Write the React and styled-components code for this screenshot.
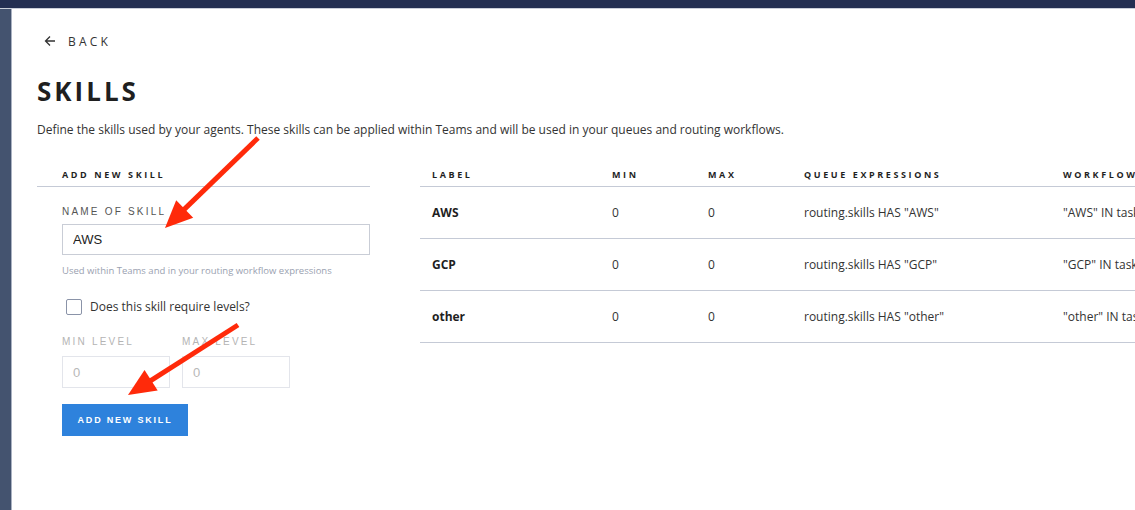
import React from 'react';
import styled, { createGlobalStyle } from 'styled-components';

const GlobalStyle = createGlobalStyle`
  html, body {
    margin: 0;
    padding: 0;
    background: #ffffff;
    font-family: 'Open Sans', sans-serif;
    color: #2b2b2b;
    overflow: hidden;
  }
`;

const Frame = styled.div`
  width: 1135px;
  height: 510px;
  display: flex;
  flex-direction: column;
  position: relative;
  overflow: hidden;
`;

const TopBar = styled.div`
  height: 8px;
  flex: none;
  background: #232f52;
  border-bottom: 1px solid #c9ced9;
`;

const Body = styled.div`
  flex: 1;
  display: flex;
  min-height: 0;
`;

const SideStrip = styled.div`
  width: 11px;
  flex: none;
  background: #44536f;
  border-right: 1px solid #aab2c2;
`;

const Main = styled.main`
  flex: 1;
  padding: 22px 0 0 25px;
  min-width: 0;
  overflow: hidden;
`;

const BackLink = styled.a`
  display: flex;
  align-items: center;
  gap: 12px;
  margin-left: 7px;
  height: 20px;
  font-size: 12px;
  letter-spacing: 3.2px;
  color: #333;
  cursor: pointer;

  svg {
    width: 12px;
    height: 12px;
  }
`;

const Title = styled.h1`
  margin: 24px 0 0;
  font-size: 26px;
  line-height: 32px;
  font-weight: 700;
  letter-spacing: 3px;
  color: #1f1f1f;
`;

const Intro = styled.p`
  margin: 14px 0 0;
  font-size: 12px;
  line-height: 18px;
  color: #333;
`;

const Columns = styled.div`
  display: flex;
  gap: 50px;
  margin-top: 27px;
`;

const FormPanel = styled.section`
  width: 333px;
  flex: none;
`;

const PanelHead = styled.h3`
  box-sizing: border-box;
  margin: 0;
  padding: 0 0 2px 25px;
  height: 21px;
  line-height: 18px;
  font-size: 9px;
  font-weight: 700;
  letter-spacing: 2.6px;
  color: #1f1f1f;
  border-bottom: 1px solid #c5cad6;
`;

const FormBody = styled.div`
  padding: 19px 0 0 25px;
  display: flex;
  flex-direction: column;
`;

const FieldLabel = styled.label`
  display: block;
  font-family: 'Liberation Sans', Arial, sans-serif;
  font-size: 10px;
  line-height: 12px;
  letter-spacing: 2.2px;
  color: ${({ muted }) => (muted ? '#b4b4b4' : '#555')};
`;

const TextInput = styled.input`
  box-sizing: border-box;
  width: ${({ w }) => w || '100%'};
  height: ${({ h }) => h || '32px'};
  margin-top: ${({ gap }) => gap || '8px'};
  padding: 0 10px;
  border: 1px solid ${({ light }) => (light ? '#e3e5eb' : '#c9cdd6')};
  border-radius: 0;
  font-family: 'Liberation Sans', Arial, sans-serif;
  font-size: 13px;
  color: #222;
  outline: none;

  &::placeholder {
    color: #b8b8b8;
  }
`;

const Help = styled.div`
  margin-top: 9px;
  font-size: 9.5px;
  line-height: 14px;
  color: #9aa1b0;
`;

const CheckRow = styled.label`
  display: flex;
  align-items: center;
  gap: 8px;
  margin-top: 20px;
  padding-left: 4px;
  font-size: 12px;
  color: #333;
`;

const Box = styled.span`
  box-sizing: border-box;
  width: 16px;
  height: 16px;
  border: 1px solid #8a93a8;
  border-radius: 2px;
  background: #fff;
`;

const LevelRow = styled.div`
  display: flex;
  gap: 12px;
  margin-top: 21px;
`;

const LevelField = styled.div`
  display: flex;
  flex-direction: column;
`;

const PrimaryButton = styled.button`
  align-self: flex-start;
  margin-top: 16px;
  width: 126px;
  height: 32px;
  border: none;
  background: #2e82dc;
  color: #fff;
  font-family: 'Liberation Sans', Arial, sans-serif;
  font-size: 9px;
  font-weight: 700;
  letter-spacing: 1.8px;
  cursor: pointer;
`;

const TableWrap = styled.section`
  flex: none;
  width: 800px;
`;

const Table = styled.table`
  border-collapse: collapse;
  table-layout: fixed;
  width: 800px;
`;

const Th = styled.th`
  box-sizing: border-box;
  width: ${({ w }) => w}px;
  text-align: left;
  padding: 0 0 1px 12px;
  height: 20px;
  line-height: 18px;
  font-size: 9px;
  font-weight: 700;
  letter-spacing: 2.6px;
  color: #1f1f1f;
  white-space: nowrap;
  border-bottom: 1px solid #c5cad6;
`;

const Td = styled.td`
  height: 51px;
  padding: 0 0 0 12px;
  font-size: 12px;
  font-weight: ${({ bold }) => (bold ? 700 : 400)};
  color: ${({ bold }) => (bold ? '#1f1f1f' : '#333')};
  white-space: nowrap;
  overflow: hidden;
  border-bottom: 1px solid #c5cad6;
`;

const Overlay = styled.svg`
  position: absolute;
  inset: 0;
  pointer-events: none;
`;

const skills = ['AWS', 'GCP', 'other'];

const columns = [
  ['LABEL', 180],
  ['MIN', 96],
  ['MAX', 96],
  ['QUEUE EXPRESSIONS', 259],
  ['WORKFLOW EXPRESSIONS', 169],
];

function Arrow({ x1, y1, x2, y2 }) {
  const ang = Math.atan2(y2 - y1, x2 - x1);
  const len = 30;
  const half = 0.42;
  const bx = x2 - Math.cos(ang) * (len - 4);
  const by = y2 - Math.sin(ang) * (len - 4);
  const p1 = [x2 - Math.cos(ang - half) * len, y2 - Math.sin(ang - half) * len];
  const p2 = [x2 - Math.cos(ang + half) * len, y2 - Math.sin(ang + half) * len];
  return (
    <g>
      <line x1={x1} y1={y1} x2={bx} y2={by} stroke="#ff2a0a" strokeWidth="5" strokeLinecap="butt" />
      <polygon points={`${x2},${y2} ${p1[0]},${p1[1]} ${p2[0]},${p2[1]}`} fill="#ff2a0a" />
    </g>
  );
}

export default function App() {
  return (
    <>
      <GlobalStyle />
      <Frame>
        <TopBar />
        <Body>
          <SideStrip />
          <Main>
            <BackLink>
              <svg viewBox="0 0 12 12" fill="none" stroke="#333" strokeWidth="1.3">
                <path d="M11 6H1.5M6 1.5L1.5 6 6 10.5" />
              </svg>
              BACK
            </BackLink>
            <Title>SKILLS</Title>
            <Intro>
              Define the skills used by your agents. These skills can be applied within Teams and will be used in your queues and routing workflows.
            </Intro>
            <Columns>
              <FormPanel>
                <PanelHead>ADD NEW SKILL</PanelHead>
                <FormBody>
                  <FieldLabel>NAME OF SKILL</FieldLabel>
                  <TextInput defaultValue="AWS" h="31px" gap="6px" />
                  <Help>Used within Teams and in your routing workflow expressions</Help>
                  <CheckRow>
                    <Box />
                    Does this skill require levels?
                  </CheckRow>
                  <LevelRow>
                    <LevelField>
                      <FieldLabel muted>MIN LEVEL</FieldLabel>
                      <TextInput light w="108px" placeholder="0" />
                    </LevelField>
                    <LevelField>
                      <FieldLabel muted>MAX LEVEL</FieldLabel>
                      <TextInput light w="108px" placeholder="0" />
                    </LevelField>
                  </LevelRow>
                  <PrimaryButton>ADD NEW SKILL</PrimaryButton>
                </FormBody>
              </FormPanel>
              <TableWrap>
                <Table>
                  <thead>
                    <tr>
                      {columns.map(([name, w]) => (
                        <Th key={name} w={w}>{name}</Th>
                      ))}
                    </tr>
                  </thead>
                  <tbody>
                    {skills.map((s) => (
                      <tr key={s}>
                        <Td bold>{s}</Td>
                        <Td>0</Td>
                        <Td>0</Td>
                        <Td>routing.skills HAS "{s}"</Td>
                        <Td>"{s}" IN task.skills</Td>
                      </tr>
                    ))}
                  </tbody>
                </Table>
              </TableWrap>
            </Columns>
          </Main>
        </Body>
        <Overlay width="1135" height="510">
          <Arrow x1={258} y1={138} x2={165} y2={228} />
          <Arrow x1={238} y1={325} x2={128} y2={395} />
        </Overlay>
      </Frame>
    </>
  );
}
